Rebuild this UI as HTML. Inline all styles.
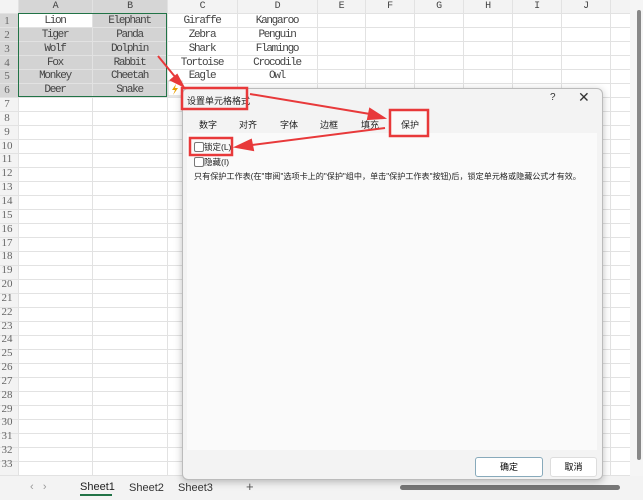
<!DOCTYPE html><html><head><meta charset="utf-8"><style>
body{margin:0;width:643px;height:500px;overflow:hidden;background:#fff;font-family:"Liberation Sans","Noto Sans CJK SC",sans-serif;position:relative}
.a{position:absolute;white-space:nowrap}
.c{position:absolute;font-family:"Liberation Mono","Noto Sans CJK SC",monospace;font-size:11px;letter-spacing:-1.3px;color:#444;text-align:center;line-height:13.85px}
.t{font-size:9px;color:#222}
</style></head><body>
<svg class="a" style="left:0;top:0" width="643" height="500">
<rect x="0" y="0" width="643" height="13" fill="#f3f3f3"/>
<rect x="0" y="0" width="18" height="476" fill="#f3f3f3"/>
<rect x="18" y="0" width="149" height="13" fill="#d6d6d6"/>
<rect x="0" y="13" width="18" height="84" fill="#d6d6d6"/>
<rect x="18" y="13" width="149" height="84" fill="#d3d3d3"/>
<rect x="19" y="14" width="73" height="13" fill="#fff"/>
<g stroke="#e2e2e2" stroke-width="1">
<path d="M92.5 0V476M167.5 0V476M237.5 0V476M317.5 0V476M365.5 0V476M414.5 0V476M463.5 0V476M512.5 0V476M561.5 0V476M610.5 0V476M18.5 0V476"/>
<path d="M0 13.5H630M0 27.5H630M0 41.5H630M0 55.5H630M0 69.5H630M0 83.5H630M0 97.5H630M0 111.5H630M0 125.5H630M0 139.5H630M0 153.5H630M0 167.5H630M0 181.5H630M0 195.5H630M0 209.5H630M0 223.5H630M0 237.5H630M0 251.5H630M0 265.5H630M0 279.5H630M0 293.5H630M0 307.5H630M0 321.5H630M0 335.5H630M0 349.5H630M0 363.5H630M0 377.5H630M0 391.5H630M0 405.5H630M0 419.5H630M0 433.5H630M0 447.5H630M0 461.5H630M0 475.5H630"/>
</g>
<rect x="18.5" y="13.5" width="148" height="83" fill="none" stroke="#217346" stroke-width="1"/>
<rect x="630" y="0" width="13" height="476" fill="#f5f5f5"/>
<rect x="637" y="10" width="4" height="450" rx="2" fill="#888"/>
<rect x="0" y="476" width="643" height="24" fill="#f3f3f3"/>
<rect x="400" y="485" width="220" height="5" rx="2.5" fill="#777"/>
<rect x="80" y="494" width="32" height="2" fill="#217346"/>
<rect x="168" y="81" width="14" height="15" fill="#fff" stroke="#ccc"/>
<path d="M176 84l-4 6h3l-2 5 5-7h-3z" fill="#e8a000"/>
</svg>
<div class="c" style="left:18px;top:0;width:74px;line-height:13px;font-size:10px">A</div>
<div class="c" style="left:92px;top:0;width:75px;line-height:13px;font-size:10px">B</div>
<div class="c" style="left:167px;top:0;width:70px;line-height:13px;font-size:10px">C</div>
<div class="c" style="left:237px;top:0;width:80px;line-height:13px;font-size:10px">D</div>
<div class="c" style="left:317px;top:0;width:48px;line-height:13px;font-size:10px">E</div>
<div class="c" style="left:365px;top:0;width:49px;line-height:13px;font-size:10px">F</div>
<div class="c" style="left:414px;top:0;width:49px;line-height:13px;font-size:10px">G</div>
<div class="c" style="left:463px;top:0;width:49px;line-height:13px;font-size:10px">H</div>
<div class="c" style="left:512px;top:0;width:49px;line-height:13px;font-size:10px">I</div>
<div class="c" style="left:561px;top:0;width:49px;line-height:13px;font-size:10px">J</div>
<div class="c" style="left:0;top:15px;width:14px;font-family:'Liberation Serif',serif;font-size:11px;letter-spacing:0;color:#666">1<br>2<br>3<br>4<br>5<br>6<br>7<br>8<br>9<br>10<br>11<br>12<br>13<br>14<br>15<br>16<br>17<br>18<br>19<br>20<br>21<br>22<br>23<br>24<br>25<br>26<br>27<br>28<br>29<br>30<br>31<br>32<br>33</div>
<div class="c" style="left:18px;top:15px;width:74px">Lion<br>Tiger<br>Wolf<br>Fox<br>Monkey<br>Deer</div>
<div class="c" style="left:92px;top:15px;width:75px">Elephant<br>Panda<br>Dolphin<br>Rabbit<br>Cheetah<br>Snake</div>
<div class="c" style="left:167px;top:15px;width:70px">Giraffe<br>Zebra<br>Shark<br>Tortoise<br>Eagle</div>
<div class="c" style="left:237px;top:15px;width:80px">Kangaroo<br>Penguin<br>Flamingo<br>Crocodile<br>Owl</div>
<div class="a" style="left:30px;top:481px;font-size:11px;color:#999">‹ &nbsp; ›</div>
<div class="a" style="left:80px;top:481px;font-size:11px;color:#222">Sheet1</div>
<div class="a" style="left:129px;top:482px;font-size:11px;color:#333">Sheet2</div>
<div class="a" style="left:178px;top:482px;font-size:11px;color:#333">Sheet3</div>
<div class="a" style="left:246px;top:479px;font-size:13px;color:#555">+</div>
<div class="a" style="left:182px;top:88px;width:419px;height:390px;background:#f3f3f3;border:1px solid #bbb;border-radius:6px;box-shadow:0 2px 8px rgba(0,0,0,.25)"></div>
<div class="a t" style="left:187px;top:94px">设置单元格格式</div>
<div class="a" style="left:550px;top:92px;font-size:10px;color:#333">?</div>
<div class="a" style="left:578px;top:89px;font-size:14px;color:#333">✕</div>
<div class="a t" style="left:199px;top:118px">数字</div>
<div class="a t" style="left:239px;top:118px">对齐</div>
<div class="a t" style="left:280px;top:118px">字体</div>
<div class="a t" style="left:320px;top:118px">边框</div>
<div class="a t" style="left:361px;top:118px">填充</div>
<div class="a" style="left:390px;top:111px;width:38px;height:22px;background:#fafafa"></div>
<div class="a t" style="left:401px;top:118px">保护</div>
<div class="a" style="left:187px;top:133px;width:410px;height:317px;background:#fafafa"></div>
<div class="a" style="left:194px;top:142px;width:8px;height:8px;border:1px solid #777;border-radius:2px;background:#fff"></div>
<div class="a t" style="left:204px;top:141px;font-size:8.5px">锁定(L)</div>
<div class="a" style="left:194px;top:157px;width:8px;height:8px;border:1px solid #777;border-radius:2px;background:#fff"></div>
<div class="a t" style="left:204px;top:156px;font-size:8.5px">隐藏(I)</div>
<div class="a t" style="left:194px;top:171px;font-size:8.1px">只有保护工作表(在"审阅"选项卡上的"保护"组中，单击"保护工作表"按钮)后，锁定单元格或隐藏公式才有效。</div>
<div class="a" style="left:475px;top:457px;width:66px;height:18px;background:#fff;border:1px solid #8ab;border-radius:3px;font-size:9px;text-align:center;line-height:18px">确定</div>
<div class="a" style="left:550px;top:457px;width:45px;height:18px;background:#fff;border:1px solid #ddd;border-radius:3px;font-size:9px;text-align:center;line-height:18px">取消</div>
<svg class="a" style="left:0;top:0" width="643" height="500">
<g fill="none" stroke="#e8393a" stroke-width="2.5">
<rect x="182" y="88" width="65" height="21"/>
<rect x="390" y="110" width="38" height="26"/>
<rect x="190" y="138" width="42" height="17"/>
</g>
<g stroke="#e8393a" stroke-width="2" fill="#e8393a">
<path d="M158 56L176 78"/><path d="M183 86l-12-6 6-5z"/>
<path d="M250 94L370 114"/><path d="M384 118l-16 1 2-10z"/>
<path d="M385 128L252 145"/><path d="M236 147l15-7 2 10z"/>
</g></svg>
</body></html>
